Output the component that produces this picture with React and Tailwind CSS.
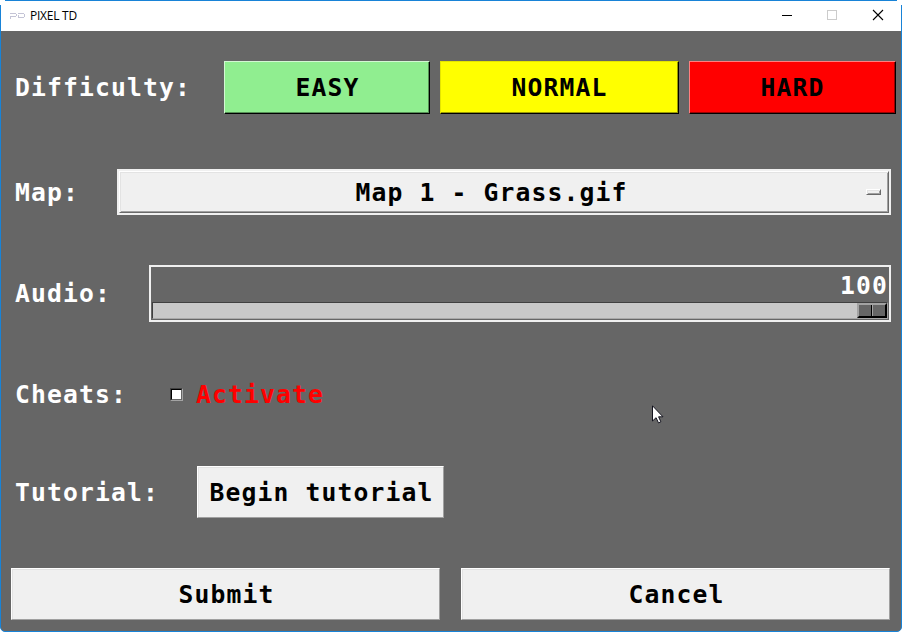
const Bevel = ({ className = '', children }) => (
  <button
    className={`flex h-[52px] items-center justify-center border border-t-white border-l-white border-r-[#a0a0a0] border-b-[#a0a0a0] bg-[#f0f0f0] pl-[2px] pt-[2px] text-black shadow-[inset_1px_1px_0_#e3e3e3] ${className}`}
  >
    {children}
  </button>
);

const Label = ({ className = '', children }) => (
  <div className={`shrink-0 whitespace-pre pl-[14px] ${className}`}>{children}</div>
);

function TitleBar() {
  return (
    <header className="flex h-[30px] items-center bg-white pl-2">
      <svg width="17" height="8" viewBox="0 0 17 8" fill="none" stroke="#c4c4d6" shapeRendering="crispEdges">
        <path d="M1 1.5h6M1.5 4v3M2 4.5h5M7.5 2v2M9 1.5h6M9.5 3v2M9 5.5h6M15.5 2v3" />
      </svg>
      <span className="ml-1 pb-px text-[12px] leading-[29px] tracking-[-0.25px] text-black font-['Open_Sans','Noto_Sans',sans-serif] font-normal">
        PIXEL TD
      </span>
      <svg className="mb-[2px] ml-auto mr-[17px]" width="102" height="12" viewBox="0 0 102 12" fill="none">
        <path d="M0 6.5h10" stroke="#000" shapeRendering="crispEdges" />
        <path d="M45.5 1.5h9v9h-9z" stroke="#ccc" shapeRendering="crispEdges" />
        <path d="M91 1l10 10M101 1L91 11" stroke="#000" strokeWidth="1.1" />
      </svg>
    </header>
  );
}

export default function App() {
  return (
    <div className="relative h-[632px] w-[902px] overflow-hidden bg-white">
      <div className="flex h-[632px] w-[902px] flex-col rounded-b-[5px] border border-[#1883d7] bg-[#666666] text-[24.7px] leading-[30px] tracking-[1.13px] text-white font-bold font-['DejaVu_Sans_Mono','Liberation_Mono',monospace]">
        <TitleBar />
        <main className="flex flex-col">
          <div className="mt-[30px] flex h-[53px] items-center">
            <Label className="w-[223px]">Difficulty:</Label>
            <button className="flex h-[53px] w-[206px] items-center justify-center border border-t-[#d3f8d3] border-l-[#d3f8d3] border-r-black border-b-black bg-[#90ee90] pl-px text-black shadow-[inset_-1px_-1px_0_#569056]">EASY</button>
            <button className="ml-[10px] flex h-[53px] w-[239px] items-center justify-center border border-t-[#e5e500] border-l-[#e5e500] border-r-black border-b-black bg-[#ffff00] text-black shadow-[inset_-1px_-1px_0_#999900]">NORMAL</button>
            <button className="ml-[10px] flex h-[53px] w-[207px] items-center justify-center border border-t-[#ff7f7f] border-l-[#ff7f7f] border-r-black border-b-black bg-[#ff0000] text-black shadow-[inset_-1px_-1px_0_#990000]">HARD</button>
          </div>

          <div className="mt-[55px] flex h-[46px] items-center">
            <Label className="w-[116px] pt-[2px]">Map:</Label>
            <div className="h-[46px] w-[774px] border-2 border-[#f0f0f0]">
              <button className="flex h-[42px] w-[770px] items-center border border-t-white border-l-white border-r-[#696969] border-b-[#696969] bg-[#f0f0f0] text-black shadow-[inset_1px_1px_0_#e3e3e3,inset_-1px_-1px_0_#a0a0a0]">
                <span className="flex-1 pr-[3px] pt-[2px] text-center">Map 1 - Grass.gif</span>
                <span className="mr-[7px] h-[6px] w-[15px] border border-t-white border-l-white border-r-[#696969] border-b-[#696969] bg-[#f0f0f0] shadow-[inset_1px_1px_0_#e3e3e3,inset_-1px_-1px_0_#a0a0a0]" />
              </button>
            </div>
          </div>

          <div className="mt-[50px] flex h-[57px] items-center">
            <Label className="w-[148px]">Audio:</Label>
            <div className="flex h-[57px] w-[742px] flex-col border-2 border-[#f0f0f0] px-px">
              <div className="h-[35px] pt-[4px] text-right">100</div>
              <div className="flex h-[17px] justify-end border border-t-[#404040] border-l-[#404040] border-r-[#a0a0a0] border-b-[#a8a8a8] bg-[#c8c8c8]">
                <div className="flex h-[15px] w-[30px] border-2 border-t-[#a3a3a3] border-l-[#a3a3a3] border-r-black border-b-black bg-[#666666]">
                  <div className="h-[11px] w-[13px] border-r border-black" />
                  <div className="h-[11px] w-px bg-[#a3a3a3]" />
                </div>
              </div>
            </div>
          </div>

          <div className="mt-[58px] flex h-[30px] items-center">
            <Label className="w-[169px]">Cheats:</Label>
            <div className="mb-[2px] h-[13px] w-[13px] border border-t-[#404040] border-l-[#404040] border-r-[#a3a3a3] border-b-[#a3a3a3]">
              <div className="h-[11px] w-[11px] border border-t-black border-l-black border-r-[#666666] border-b-[#666666] bg-white" />
            </div>
            <span className="ml-[13px] text-[#ff0000]">Activate</span>
          </div>

          <div className="mt-[56px] flex h-[52px] items-center">
            <Label className="w-[196px] pt-[2px]">Tutorial:</Label>
            <Bevel className="w-[247px]">Begin tutorial</Bevel>
          </div>

          <div className="mt-[50px] flex gap-[21px] pl-[10px]">
            <Bevel className="w-[429px]">Submit</Bevel>
            <Bevel className="w-[429px]">Cancel</Bevel>
          </div>
        </main>
      </div>
      <div className="absolute left-0 top-0 h-[5px] w-[5px] bg-white" />
      <div className="absolute right-0 top-0 h-[5px] w-[5px] bg-white" />
      <svg className="absolute left-[652px] top-[405px]" width="13" height="20" viewBox="0 0 13 20">
        <path d="M.5.8v15.2l3.6-3.3 2.4 5.2 2.4-1-2.3-5.1h4.4z" fill="#fff" stroke="#14141f" strokeWidth="1" />
      </svg>
    </div>
  );
}
